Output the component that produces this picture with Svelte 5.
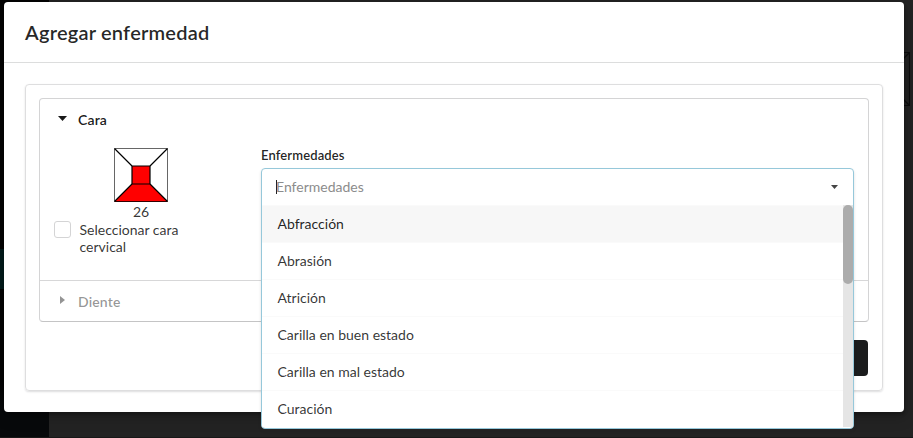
<script>
  const options = ['Abfracción', 'Abrasión', 'Atrición', 'Carilla en buen estado', 'Carilla en mal estado', 'Curación'];
  let selected = $state(0);
  let cervical = $state(false);
</script>

<div class="page">
  <aside><div class="active-link"></div></aside>
  <svg class="page-tooth" width="54" height="54" viewBox="0 0 54 54">
    <path d="M.5.5h53v53H.5zM.5.5l18 18M53.5.5l-18 18M.5 53.5l18-18M53.5 53.5l-18-18" />
  </svg>
  <section class="modal">
    <header>Agregar enfermedad</header>
    <div class="content">
      <div class="segment">
        <div class="accordion">
          <div class="panel">
            <div class="title">
              <svg width="9" height="5" viewBox="0 0 9 5"><path d="M0 0h9L4.5 5z" /></svg>
              <span>Cara</span>
            </div>
            <div class="grid">
              <div class="tooth-column">
                <figure>
                  <svg width="54" height="54" viewBox="0 0 54 54" stroke="#000">
                    <path fill="#f00" stroke="none" d="M.5 53.5l17.5-17.5h18l17.5 17.5z" />
                    <path fill="none" stroke="#666" d="M.5 53.5V.5h53v53" />
                    <path fill="none" stroke="#300" d="M.5 53.5h53" />
                    <path fill="#f00" stroke-width="1.2" d="M18 18h18v18H18z" />
                    <path fill="none" stroke-width="1.2" d="M.5.5L18 18M53.5.5L36 18M.5 53.5L18 36M53.5 53.5L36 36" />
                  </svg>
                  <figcaption>26</figcaption>
                </figure>
                <label class="check">
                  <input type="checkbox" bind:checked={cervical} />
                  <span>Seleccionar cara cervical</span>
                </label>
              </div>
              <div class="field">
                <div class="label">Enfermedades</div>
                <div class="dropdown">
                  <div class="search">
                    <i class="caret"></i><span>Enfermedades</span>
                    <svg width="7" height="4" viewBox="0 0 7 4"><path d="M0 0h7L3.5 4z" /></svg>
                  </div>
                  <div class="menu">
                    <div class="options">
                      {#each options as option, i}
                        <button class:selected={selected === i} onclick={() => (selected = i)}>{option}</button>
                      {/each}
                    </div>
                    <div class="track"><div class="thumb"></div></div>
                  </div>
                </div>
              </div>
            </div>
          </div>
          <div class="title closed">
            <svg width="5" height="8" viewBox="0 0 5 8"><path d="M0 0v8l5-4z" /></svg>
            <span>Diente</span>
          </div>
        </div>
        <div class="actions"><button class="submit" aria-label="Agregar"></button></div>
      </div>
    </div>
  </section>
</div>

<style>
  .page, .page * { box-sizing: border-box; }
  .page {
    position: relative;
    width: 913px;
    height: 438px;
    padding: 2px 9px 26px 4px;
    overflow: hidden;
    background: #232323;
    border-bottom: 1px solid #181818;
    color: rgba(0, 0, 0, 0.8);
    font: 14px/18px Lato, sans-serif;
  }
  aside {
    position: absolute;
    inset: 0 auto 0 0;
    width: 49px;
    padding-top: 249px;
    background: linear-gradient(#030303 0 380px, #07090b 412px);
  }
  .active-link { height: 40px; background: #021a1a; }
  .page-tooth { position: absolute; left: 856px; top: 52px; fill: none; stroke: #0c0c0c; stroke-width: 1.2; }
  .modal {
    position: relative;
    height: 410px;
    background: #fff;
    border-radius: 4px;
    box-shadow: 1px 3px 3px rgba(0, 0, 0, 0.2), 1px 3px 15px 2px rgba(0, 0, 0, 0.2);
  }
  header {
    height: 61px;
    padding: 17px 21px;
    border-bottom: 1px solid #dcdddd;
    color: rgba(0, 0, 0, 0.85);
    font-size: 20px;
    font-weight: 600;
    letter-spacing: 0.21px;
    line-height: 26px;
  }
  .content { padding: 21px; }
  .segment {
    height: 307px;
    padding: 13px;
    border: 1px solid #dededf;
    border-radius: 4px;
    box-shadow: 0 1px 2px rgba(34, 36, 38, 0.15);
  }
  .accordion {
    height: 224px;
    border: 1px solid #d4d4d5;
    border-bottom-color: #c4c4c5;
    border-radius: 4px;
  }
  .panel { height: 182px; border-bottom: 1px solid #d7d7d8; }
  .title {
    display: flex;
    height: 40px;
    padding: 12px 14px;
    color: rgba(0, 0, 0, 0.9);
    font-weight: 600;
    letter-spacing: 0.15px;
  }
  .title svg { margin: 5px 0 0 4px; fill: currentColor; }
  .title span { margin-left: 11px; }
  .title.closed { color: rgba(0, 0, 0, 0.42); }
  .closed svg { margin: 3px 2px 0 6px; }
  .grid { display: flex; padding: 8px 14px 0; }
  .tooth-column { width: 207px; flex: none; }
  figure { width: 174px; margin: 1px 0 0; text-align: center; }
  figure svg { display: block; margin: 0 60px; }
  figcaption { line-height: 20px; }
  .check { display: flex; width: 150px; margin-top: -1px; line-height: 17px; }
  .check input {
    appearance: none;
    flex: none;
    width: 17px;
    height: 17px;
    margin: 0 8.5px 0 0;
    border: 1px solid #d4d4d5;
    border-radius: 3px;
  }
  .check input:checked { background: #555; }
  .field { width: 593px; }
  .label {
    height: 21px;
    color: rgba(0, 0, 0, 0.87);
    font-size: 13px;
    font-weight: 600;
    letter-spacing: 0.12px;
    line-height: 17px;
  }
  .dropdown {
    position: relative;
    z-index: 2;
    height: 261px;
    overflow: hidden;
    background: #fff;
    border: 1px solid #96c8da;
    border-radius: 4px;
    box-shadow: 0 2px 3px rgba(34, 36, 38, 0.15);
  }
  .search {
    display: flex;
    align-items: center;
    height: 36px;
    padding: 0 15px 0 14px;
    color: #8c8c8c;
  }
  .search span { margin-left: -1px; }
  .search svg { margin-left: auto; fill: #444; }
  .caret { width: 1px; height: 14px; background: #222; }
  .menu { display: flex; }
  .options { flex: 1; }
  .options button {
    display: block;
    width: 100%;
    height: 37px;
    padding: 0 15.5px;
    border: 0;
    border-top: 1px solid #fafafa;
    background: #fff;
    color: rgba(0, 0, 0, 0.8);
    font: inherit;
    text-align: left;
  }
  .options button.selected { background: #f7f7f7; color: rgba(0, 0, 0, 0.87); }
  .track { width: 10px; background: #e5e5e5; }
  .thumb { height: 79px; border-radius: 5px; background: #acacac; }
  .actions { display: flex; justify-content: flex-end; padding: 18px 1px 0 0; }
  .submit { width: 90px; height: 36px; border: 0; border-radius: 4px; background: #1b1c1d; }
</style>
